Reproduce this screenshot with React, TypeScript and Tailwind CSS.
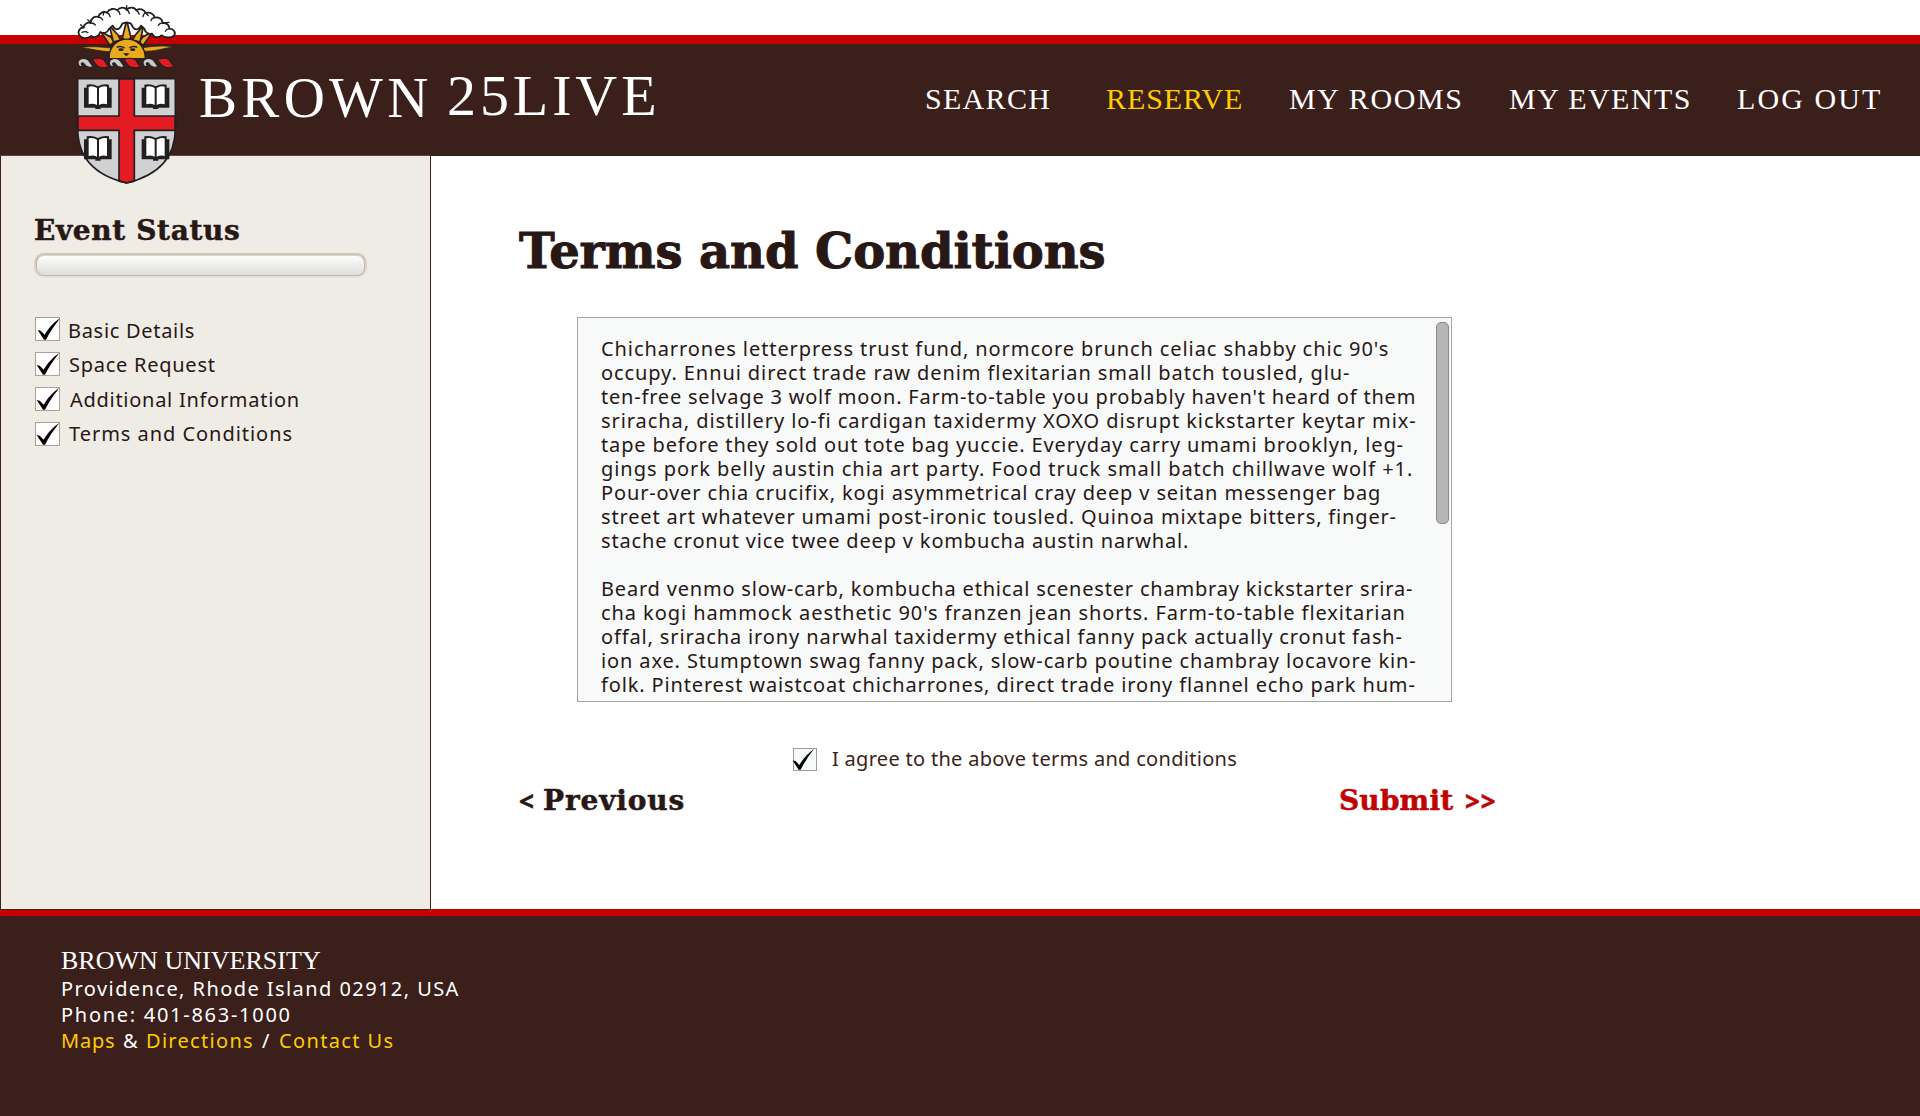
import React from "react";

const NAV = [
  { label: "SEARCH", cls: "w-[181px] tracking-[1.3px] text-white" },
  { label: "RESERVE", cls: "w-[183px] tracking-[0.9px] text-[#ffcc00]" },
  { label: "MY ROOMS", cls: "w-[220px] tracking-[1.66px] text-white" },
  { label: "MY EVENTS", cls: "w-[228px] tracking-[1.48px] text-white" },
  { label: "LOG OUT", cls: "w-[160px] tracking-[2.1px] text-white" },
];

const STEPS = [
  { label: "Basic Details", cls: "ml-[8px] pt-[2px] tracking-[0.7px]", shift: "" },
  { label: "Space Request", cls: "ml-[9px] pt-px tracking-[0.74px]", shift: "-translate-x-px" },
  { label: "Additional Information", cls: "ml-[10px] pt-px tracking-[0.72px]", shift: "-translate-x-px" },
  { label: "Terms and Conditions", cls: "ml-[9px] tracking-[0.96px]", shift: "-translate-x-px" },
];

const TERMS = [
  { text: "Chicharrones letterpress trust fund, normcore brunch celiac shabby chic 90's", cls: "tracking-[0.914px]" },
  { text: "occupy. Ennui direct trade raw denim flexitarian small batch tousled, glu-", cls: "tracking-[0.913px]" },
  { text: "ten-free selvage 3 wolf moon. Farm-to-table you probably haven't heard of them", cls: "tracking-[0.794px]" },
  { text: "sriracha, distillery lo-fi cardigan taxidermy XOXO disrupt kickstarter keytar mix-", cls: "tracking-[0.938px]" },
  { text: "tape before they sold out tote bag yuccie. Everyday carry umami brooklyn, leg-", cls: "tracking-[0.851px]" },
  { text: "gings pork belly austin chia art party. Food truck small batch chillwave wolf +1.", cls: "tracking-[0.956px]" },
  { text: "Pour-over chia crucifix, kogi asymmetrical cray deep v seitan messenger bag", cls: "tracking-[0.856px]" },
  { text: "street art whatever umami post-ironic tousled. Quinoa mixtape bitters, finger-", cls: "tracking-[0.835px]" },
  { text: "stache cronut vice twee deep v kombucha austin narwhal.", cls: "tracking-[0.835px] mb-6" },
  { text: "Beard venmo slow-carb, kombucha ethical scenester chambray kickstarter srira-", cls: "tracking-[0.807px]" },
  { text: "cha kogi hammock aesthetic 90's franzen jean shorts. Farm-to-table flexitarian", cls: "tracking-[0.925px]" },
  { text: "offal, sriracha irony narwhal taxidermy ethical fanny pack actually cronut fash-", cls: "tracking-[0.865px]" },
  { text: "ion axe. Stumptown swag fanny pack, slow-carb poutine chambray locavore kin-", cls: "tracking-[0.869px]" },
  { text: "folk. Pinterest waistcoat chicharrones, direct trade irony flannel echo park hum-", cls: "tracking-[0.855px]" },
];

function Check({ className }: { className?: string }) {
  return (
    <svg viewBox="3 3 69 66" className={"h-full w-full overflow-visible " + (className ?? "")}>
      <path d="M8 39 L17 41 L29 53 C42 33 55 16 76 3 C59 23 45 46 33 68 L27 68 Z" fill="#000" />
    </svg>
  );
}

function Book({ x, y }: { x: number; y: number }) {
  return (
    <g transform={`translate(${x} ${y})`}>
      <path d="M0 10 H8 V1 Q26 -3 42 6 Q58 -3 75 1 V10 H83 V70 H50 V74 H34 V70 H0 Z" fill="#231f20" />
      <path d="M14 7 Q28 3 39 11 V62 Q27 56 14 60 Z" fill="#fff" />
      <path d="M69 7 Q56 3 45 11 V62 Q57 56 69 60 Z" fill="#fff" />
    </g>
  );
}

const TWIST_BAND = "M0 5 C10 -2 30 -2 38 6 C43 13 44 20 52 24 C44 30 27 30 17 23 C10 17 8 10 0 5 Z";
const TWIST_HOOK =
  "M2 14 C1 3 13 -1 25 1 C37 3 38 17 48 24 C39 29 27 27 22 19 C18 12 12 12 12 17 C12 21 15 22 18 23 C9 28 2 22 2 14 Z";

function Crest() {
  return (
    <svg viewBox="0 0 390 570" className="absolute left-[60px] top-0 z-20 h-[190px] w-[130px]">
      {/* sun rays */}
      <g fill="#e9ab1e" stroke="#231f20" strokeWidth="5" strokeLinejoin="round">
        <path d="M60 142 C95 138 125 141 152 144 L150 155 C118 154 92 146 60 142 Z" strokeWidth="2" />
        <path d="M340 140 C305 136 278 139 250 143 L252 154 C284 154 310 146 340 140 Z" strokeWidth="2" />
        <path d="M121 94 L153 112 L163 126 L150 136 Z" />
        <path d="M280 93 L247 112 L237 126 L250 136 Z" />
        <path d="M148 76 L174 105 L182 120 L160 126 Z" />
        <path d="M251 76 L226 105 L218 120 L240 126 Z" />
        <path d="M200 60 L213 114 L199 124 L187 114 Z" />
      </g>
      {/* cloud */}
      <path
        d="M57 104 C52 93 60 82 71 83 C72 71 83 66 92 69 C92 55 104 47 115 51 C118 38 131 33 141 38 C147 26 164 23 172 31 C179 21 193 20 200 29 C208 20 224 21 229 31 C239 24 252 28 257 39 C270 35 282 42 284 53 C297 50 307 58 308 69 C320 68 329 76 328 86 C341 86 349 97 342 107 C331 116 314 113 304 106 C295 116 280 112 276 101 C266 104 256 98 253 86 L243 77 C237 90 226 92 219 82 L212 70 L200 67 L188 70 L181 82 C172 92 163 88 158 77 L147 87 C142 99 130 102 121 96 C117 110 104 115 94 108 C80 119 62 116 57 104 Z"
        fill="#fff"
        stroke="#231f20"
        strokeWidth="5.5"
        strokeLinejoin="round"
      />
      <g fill="none" stroke="#231f20" strokeWidth="4" strokeLinecap="round">
        <path d="M71 83 L62 74 M92 69 Q101 68 106 75 M92 69 L83 59 M115 51 Q124 52 128 60 M131 34 L130 45 M141 38 Q149 42 150 50 M172 31 Q179 35 180 43 M200 29 V17 M200 29 Q207 33 208 41 M257 39 L265 47 M229 31 Q237 36 237 43 M257 39 Q249 42 249 50 M284 53 Q275 54 273 62 M308 69 Q299 68 295 76 M308 69 L327 67 M66 97 Q76 92 84 98 M328 86 Q319 87 316 94" />
      </g>
      {/* sun disc and face */}
      <path d="M147 176 C147 98 256 98 256 176 Z" fill="#e9ab1e" stroke="#231f20" strokeWidth="4" />
      <path d="M170 142 Q182 136 194 144 M208 144 Q219 136 232 142" fill="none" stroke="#231f20" strokeWidth="4" />
      <g fill="#231f20">
        <ellipse cx="183" cy="149" rx="8" ry="4" />
        <ellipse cx="218" cy="149" rx="8" ry="4" />
        <path d="M189 160 L209 160 L199 169 Z" />
      </g>
      {/* torse */}
      <g stroke="#231f20" strokeWidth="3.5" strokeLinejoin="round">
        {[95, 190, 291].map((x) => (
          <path key={x} transform={`translate(${x} 175)`} d={TWIST_BAND} fill="#e31b23" />
        ))}
        {[52, 146, 247].map((x) => (
          <path key={x} transform={`translate(${x} 175)`} d={TWIST_HOOK} fill="#c9cacc" />
        ))}
      </g>
      {/* shield */}
      <path d="M53 236 H346 V385 C346 485 280 530 200 549 C118 530 53 485 53 385 Z" fill="#d0d1d3" />
      <Book x={72} y={253} />
      <Book x={245} y={253} />
      <Book x={72} y={408} />
      <Book x={245} y={408} />
      <path
        d="M177 236 H223 V348 H346 V391 H223 V543 L200 549 L177 543 V391 H53 V348 H177 Z"
        fill="#e31b23"
        stroke="#231f20"
        strokeWidth="5"
      />
      <path
        d="M53 236 H346 V385 C346 485 280 530 200 549 C118 530 53 485 53 385 Z"
        fill="none"
        stroke="#231f20"
        strokeWidth="5"
      />
    </svg>
  );
}

export default function App() {
  return (
    <div className="relative flex h-[1116px] w-[1920px] flex-col overflow-hidden bg-white font-['Noto_Sans',sans-serif] text-[20px] leading-6 text-[#271715]">
      <Crest />

      <header className="flex h-[155px] shrink-0 flex-col pt-[35px]">
        <div className="h-[9px] bg-[#c70000]" />
        <div className="flex flex-1 items-start justify-between bg-[#3a1f1b] font-['Liberation_Serif',serif] text-white">
          <h1 className="flex pl-[199px] pt-[25px] text-[57px] leading-[57px]">
            <span className="w-[248px] tracking-[4.3px]">BROWN</span>
            <span className="-mt-[2px] text-[58px] tracking-[3.9px]">25LIVE</span>
          </h1>
          <nav className="flex w-[996px] pl-px pt-[40px] text-[30px] leading-[30px]">
            {NAV.map((n) => (
              <a key={n.label} className={"shrink-0 whitespace-nowrap " + n.cls}>
                {n.label}
              </a>
            ))}
          </nav>
        </div>
      </header>

      <div className="flex h-[754px] shrink-0">
        <aside className="z-10 h-[755px] w-[431px] shrink-0 border border-[#3a1f1b] border-t-[#5d4642] bg-[#efece5] pl-[33px] pt-[61px]">
          <h2 className="font-['DejaVu_Serif',serif] text-[28px] leading-[28px] font-bold tracking-[0.63px] [-webkit-text-stroke:0.5px]">
            Event Status
          </h2>
          <div className="mt-[8px] h-[25px] w-[333px] rounded-[10px] bg-linear-to-b from-[#cdc4b5] to-[#e2e1dd] p-[2px]">
            <div className="h-full rounded-[8px] border border-[#bdb8b0] border-t-[#d8d4cc] bg-linear-to-b from-[#fdfdfc] to-[#dddddb]" />
          </div>
          <ul className="mt-[39px] flex flex-col gap-[11px] pl-px">
            {STEPS.map((s) => (
              <li key={s.label} className="flex h-[24px] items-start">
                <span className="h-[24px] w-[25px] shrink-0 border border-[#aaa395] bg-white">
                  <Check className={s.shift} />
                </span>
                <span className={"whitespace-nowrap " + s.cls}>{s.label}</span>
              </li>
            ))}
          </ul>
        </aside>

        <main className="flex-1 border-t border-[#3a1f1b] pl-[88px]">
          <h2 className="mt-[71px] font-['DejaVu_Serif',serif] text-[48px] leading-[48px] font-bold tracking-[-0.08px] [-webkit-text-stroke:1px]">
            Terms and Conditions
          </h2>
          <section className="relative ml-[58px] mt-[42px] h-[385px] w-[875px] overflow-hidden border border-[#a7a39f] bg-[#f8faf9] pl-[23px] pt-[19px]">
            {TERMS.map((l) => (
              <p key={l.text} className={"whitespace-nowrap " + l.cls}>
                {l.text}
              </p>
            ))}
            <div className="absolute right-[2px] top-[4px] h-[202px] w-[13px] rounded-[5px] border border-[#8f8982] bg-[#b6b6b6]" />
          </section>
          <label className="ml-[274px] mt-[46px] flex h-[24px] items-start">
            <span className="h-[23px] w-[24px] border border-[#a09b92] bg-[#f8faf9]">
              <Check className="-translate-x-[3px]" />
            </span>
            <span className="ml-[15px] -mt-px tracking-[0.3px] text-[#3a1f1b]">
              I agree to the above terms and conditions
            </span>
          </label>
          <div className="mt-[15px] flex w-[976px] items-start justify-between font-['DejaVu_Serif',serif] text-[28px] leading-[28px] font-bold [-webkit-text-stroke:0.5px]">
            <a className="flex">
              <span className="w-[24px] font-['Noto_Sans',sans-serif] text-[26px]">&lt;</span>
              <span className="tracking-[0.85px]">Previous</span>
            </a>
            <a className="flex text-[#c00404]">
              <span className="w-[126px] tracking-[0.15px]">Submit</span>
              <span className="w-[30px] font-['Noto_Sans',sans-serif] text-[26px] tracking-[0.8px]">&gt;&gt;</span>
            </a>
          </div>
        </main>
      </div>

      <footer className="flex-1 border-t-[7px] border-[#c70000] bg-[#3a1f1b] pl-[61px] pt-[32px] text-white">
        <div className="font-['Liberation_Serif',serif] text-[26px] leading-[26px] tracking-[0.03px]">
          BROWN UNIVERSITY
        </div>
        <address className="mt-[2px] flex flex-col text-[20px] leading-[26px] not-italic">
          <span className="tracking-[1.43px]">Providence, Rhode Island 02912, USA</span>
          <span className="tracking-[1.72px]">Phone: 401-863-1000</span>
          <span className="flex">
            <a className="w-[62px] tracking-[0.78px] text-[#ffcc00]">Maps</a>
            <span className="w-[23px]">&amp;</span>
            <a className="w-[116px] tracking-[1.3px] text-[#ffcc00]">Directions</a>
            <span className="w-[17px]">/</span>
            <a className="tracking-[1.36px] text-[#ffcc00]">Contact Us</a>
          </span>
        </address>
      </footer>
    </div>
  );
}
